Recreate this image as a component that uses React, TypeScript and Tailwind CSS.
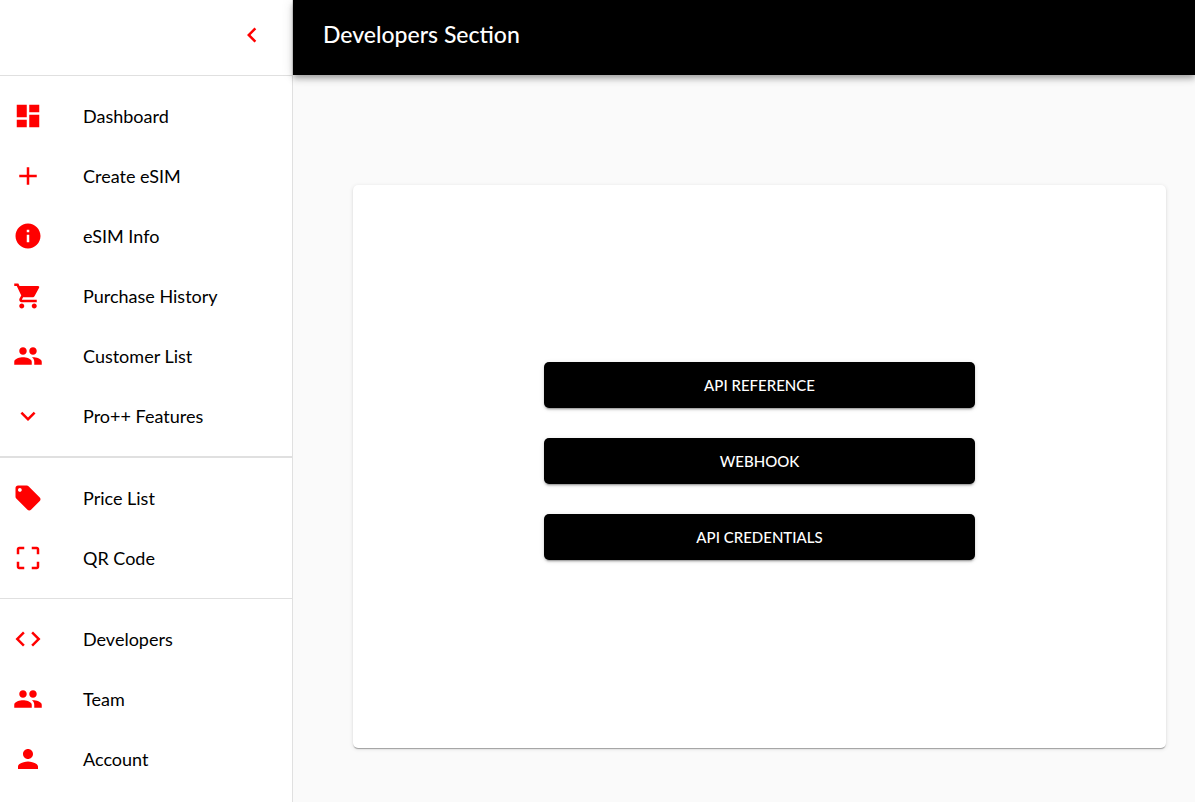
import { useState } from 'react';
import type { IconType } from 'react-icons';
import {
  MdAdd,
  MdChevronLeft,
  MdCode,
  MdCropFree,
  MdDashboard,
  MdExpandMore,
  MdInfo,
  MdLocalOffer,
  MdPeople,
  MdPerson,
  MdShoppingCart,
} from 'react-icons/md';

type NavItem = { name: string; icon: IconType; href?: string };

const mainItems: NavItem[] = [
  { name: 'Dashboard', icon: MdDashboard, href: '#dashboard' },
  { name: 'Create eSIM', icon: MdAdd, href: '#create' },
  { name: 'eSIM Info', icon: MdInfo, href: '#info' },
  { name: 'Purchase History', icon: MdShoppingCart, href: '#history' },
  { name: 'Customer List', icon: MdPeople, href: '#customers' },
  { name: 'Pro++ Features', icon: MdExpandMore },
];

const toolItems: NavItem[] = [
  { name: 'Price List', icon: MdLocalOffer, href: '#prices' },
  { name: 'QR Code', icon: MdCropFree, href: '#qr' },
];

const accountItems: NavItem[] = [
  { name: 'Developers', icon: MdCode, href: '#developers' },
  { name: 'Team', icon: MdPeople, href: '#team' },
  { name: 'Account', icon: MdPerson, href: '#account' },
];

const actions = ['API Reference', 'Webhook', 'API Credentials'];

function NavList({ items }: { items: NavItem[] }) {
  const itemClass = 'flex h-[60px] w-full items-center gap-10 px-[13px] text-left hover:bg-black/5';

  return (
    <ul className="py-[10px]">
      {items.map(({ name, icon: Icon, href }) => (
        <li key={name}>
          {href ? (
            <a href={href} className={itemClass}>
              <Icon className="size-[30px] shrink-0 text-[#ff0000]" />
              <span>{name}</span>
            </a>
          ) : (
            <button type="button" className={itemClass}>
              <Icon className="size-[30px] shrink-0 text-[#ff0000]" />
              <span>{name}</span>
            </button>
          )}
        </li>
      ))}
    </ul>
  );
}

export default function App() {
  const [open, setOpen] = useState(true);

  return (
    <div className="flex min-h-screen bg-[#fafafa] font-['Lato',sans-serif] text-black">
      {/* Sidebar */}
      <aside
        className={`shrink-0 overflow-hidden border-r border-[#e0e0e0] bg-white ${
          open ? 'w-[293px]' : 'w-[57px]'
        }`}
      >
        <div className="flex h-[76px] items-center justify-end border-b border-[#e0e0e0] pr-[25px] pb-[6px]">
          <button type="button" aria-label="Toggle menu" onClick={() => setOpen(!open)}>
            <MdChevronLeft className="size-[30px] text-[#ff0000]" />
          </button>
        </div>
        <nav className="text-lg whitespace-nowrap">
          <NavList items={mainItems} />
          <hr className="border-t-2 border-[#e0e0e0]" />
          <NavList items={toolItems} />
          <hr className="border-t border-[#e0e0e0]" />
          <NavList items={accountItems} />
        </nav>
      </aside>

      <div className="flex min-w-0 flex-1 flex-col">
        {/* Header */}
        <header className="relative z-10 flex h-[75px] items-center bg-black px-[30px] pb-[6px] shadow-[0_3px_5px_-1px_rgba(0,0,0,0.2),0_5px_6px_0_rgba(0,0,0,0.14),0_1px_12px_0_rgba(0,0,0,0.12)]">
          <h1 className="text-[23px] font-medium text-white">Developers Section</h1>
        </header>

        {/* Main Content */}
        <main className="flex flex-1 flex-col pt-[110px] pr-[29px] pb-[54px] pl-[60px]">
          <section className="flex flex-1 flex-col items-center justify-center gap-[30px] rounded-[5px] bg-white pb-3 shadow-[0_2px_1px_-1px_rgba(0,0,0,0.2),0_1px_1px_0_rgba(0,0,0,0.14),0_1px_4px_0_rgba(0,0,0,0.12)]">
            {actions.map((action) => (
              <button
                key={action}
                type="button"
                className="h-[46px] w-full max-w-[431px] rounded-[5px] bg-black pt-[2px] text-[15px] font-medium text-white uppercase shadow-[0_3px_1px_-2px_rgba(0,0,0,0.2),0_2px_2px_0_rgba(0,0,0,0.14),0_1px_5px_0_rgba(0,0,0,0.12)]"
              >
                {action}
              </button>
            ))}
          </section>
        </main>
      </div>
    </div>
  );
}
